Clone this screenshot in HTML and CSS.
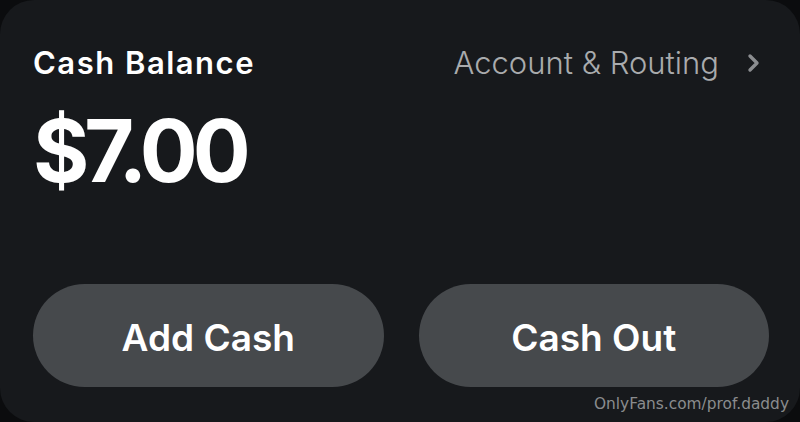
FILE: index.html
```html
<!DOCTYPE html>
<html lang="en">
  <head>
    <meta charset="utf-8">
    <title>Cash Balance</title>
    <link rel="stylesheet" href="styles.css">
  </head>
  <body>
    <div class="card">
      <div class="top">
        <h1 class="title">Cash Balance</h1>
        <a class="routing" href="#">Account &amp; Routing
          <svg class="chev" width="14" height="20" viewBox="0 0 14 20"><path d="M3 3l7 7-7 7" fill="none" stroke="currentColor" stroke-width="3.4" stroke-linecap="round" stroke-linejoin="round"/></svg>
        </a>
      </div>
      <p class="amount">$7.00</p>
      <div class="actions">
        <button class="btn">Add Cash</button>
        <button class="btn">Cash Out</button>
      </div>
      <span class="mark">OnlyFans.com/prof.daddy</span>
    </div>
  </body>
</html>
```

FILE: styles.css
```css
html {
  margin: 0;
  padding: 0;
  font-family: Inter, "Open Sans", sans-serif;
}
body {
  margin: 0;
  background-color: #0b0c0e;
}
.card {
  position: relative;
  box-sizing: border-box;
  width: 800px;
  height: 422px;
  padding: 44px 31px 35px 33px;
  display: flex;
  flex-direction: column;
  background-color: #17191c;
  border-radius: 34px;
}
.top {
  display: flex;
  justify-content: space-between;
  align-items: center;
}
.title {
  margin: 0;
  font-size: 31px;
  font-weight: 600;
  color: #fff;
  letter-spacing: 1.5px;
}
.routing {
  display: flex;
  align-items: center;
  gap: 28px;
  padding-right: 8px;
  font-size: 31px;
  font-weight: 300;
  color: #a9abad;
  text-decoration: none;
}
.chev {
  color: #8b8d90;
}
.amount {
  margin: 27px 0 0;
  font-size: 86px;
  font-weight: 700;
  color: #fff;
  letter-spacing: -5px;
  line-height: 1;
}
.actions {
  margin-top: auto;
  display: grid;
  grid-template-columns: 1fr 1fr;
  gap: 35px;
}
.btn {
  height: 103px;
  border: 0;
  border-radius: 52px;
  background-color: #46494c;
  color: #fff;
  font: 600 37px Inter, "Open Sans", sans-serif;
  padding-top: 5px;
}
.mark {
  position: absolute;
  right: 11px;
  bottom: 9px;
  font: 15.4px "DejaVu Sans", sans-serif;
  color: #8a8c8e;
}
```
